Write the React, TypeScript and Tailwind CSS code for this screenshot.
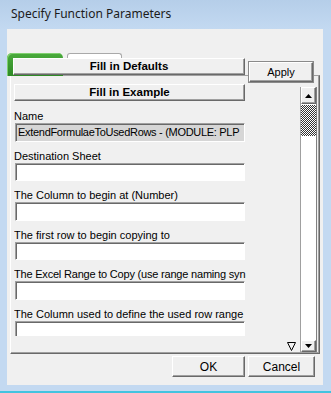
import React from "react";

const raised =
  "bg-[#f0f0f0] border border-t-white border-l-white border-r-[#696969] border-b-[#696969] shadow-[inset_-1px_-1px_0_#a0a0a0]";
const sunken =
  "border border-t-[#a0a0a0] border-l-[#a0a0a0] border-r-white border-b-white shadow-[inset_1px_1px_0_#696969]";

function Field({ label, tight }: { label: string; tight?: boolean }) {
  return (
    <div className="flex flex-col shrink-0">
      <div
        className={`h-[21px] pt-[8px] leading-[13px] whitespace-nowrap overflow-hidden ${
          tight ? "tracking-[-0.2px]" : ""
        }`}
      >
        {label}
      </div>
      <div className={`h-[18.5px] w-[230px] ml-[1px] bg-white ${sunken}`} />
    </div>
  );
}

function Tri({ up }: { up: boolean }) {
  return (
    <svg width="7" height="4" viewBox="0 0 7 4">
      {up ? <polygon points="0,4 7,4 3.5,0" fill="#000" /> : <polygon points="0,0 7,0 3.5,4" fill="#000" />}
    </svg>
  );
}

export default function App() {
  const labels: { t: string; tight?: boolean }[] = [
    { t: "Destination Sheet" },
    { t: "The Column to begin at (Number)" },
    { t: "The first row to begin copying to" },
    { t: "The Excel Range to Copy (use range naming syn", tight: true },
    { t: "The Column used to define the used row range" },
  ];
  return (
    <div className="w-[331px] h-[393px] flex flex-col bg-[#c1d8f0] overflow-hidden">
      <div className="h-[29px] shrink-0 flex items-center pl-[11px] pb-[2px] bg-gradient-to-b from-[#b5cee9] to-[#c3d9f1] text-[12px] text-[#1b1b1b] font-['Noto_Sans',sans-serif]">
        Specify Function Parameters
      </div>
      <div className="flex h-[356px] shrink-0">
        <div className="w-[7px] shrink-0 bg-[#c3d9f1]" />
        <div className="w-[316px] shrink-0 bg-[#f0f0f0] relative flex flex-col text-[11px] text-black font-['Liberation_Sans',Arial,sans-serif]">
          <div className="h-[24px] shrink-0" />
          <div className="h-[22px] shrink-0 flex items-start relative z-10">
            <div className="w-[56px] h-[23px] rounded-t-[5px] bg-gradient-to-b from-[#4aab3c] to-[#2f8a26] shadow-[inset_1px_1px_0_#7fcf6f]" />
            <div className="ml-[4px] w-[55px] h-[22px] rounded-t-[3px] bg-white border border-[#a9a9a9] border-b-0" />
          </div>
          <div className="ml-[3px] w-[310px] h-[279px] shrink-0 flex border-t border-t-[#a0a0a0] border-l border-l-white border-r border-r-[#696969] border-b border-b-[#696969] shadow-[inset_-1px_-1px_0_#a0a0a0]">
            <div className="w-[289px] shrink-0 flex flex-col pl-[3px] pt-[8px]">
              <div className="h-[252px] w-[232px] overflow-hidden flex flex-col">
                <div className={`h-[17px] w-[231px] shrink-0 mb-[1px] flex items-center justify-center font-bold text-[11.5px] ${raised}`}>
                  Fill in Example
                </div>
                <div className="flex flex-col shrink-0">
                  <div className="h-[21px] pt-[8px] leading-[13px] whitespace-nowrap">Name</div>
                  <div className={`h-[18.5px] w-[230px] ml-[1px] bg-[#d6d6d6] ${sunken} flex items-center pl-[2px] whitespace-nowrap overflow-hidden leading-[13px] tracking-[-0.3px]`}>
                    ExtendFormulaeToUsedRows - (MODULE: PLP
                  </div>
                </div>
                {labels.map((l) => (
                  <Field key={l.t} label={l.t} tight={l.tight} />
                ))}
              </div>
              <div className="flex justify-end pr-[4px] pt-[6px]">
                <svg width="9" height="9" viewBox="0 0 9 9">
                  <polygon points="0.5,0.5 8.5,0.5 4.5,8.5" fill="none" stroke="#000" strokeWidth="1" />
                </svg>
              </div>
            </div>
            <div className="w-[17px] shrink-0 mt-[11px] h-[265px] flex flex-col bg-white border-l border-l-[#a0a0a0] border-r border-r-[#808080]">
              <div className={`h-[17px] shrink-0 flex items-center justify-center ${raised}`}>
                <Tri up />
              </div>
              <div className="h-[31px] mt-[1px] shrink-0 bg-[repeating-conic-gradient(#333333_0_25%,#ffffff_0_50%)] bg-[length:2px_2px]" />
              <div className="flex-1" />
              <div className={`h-[12px] shrink-0 flex items-center justify-center ${raised}`}>
                <Tri up={false} />
              </div>
            </div>
          </div>
          <div className="mt-[2px] h-[21px] shrink-0 flex justify-end gap-[3px] pr-[8px] text-[12px]">
            <div className={`w-[73px] h-[21px] flex items-center justify-center ${raised}`}>OK</div>
            <div className={`w-[67px] h-[21px] flex items-center justify-center ${raised}`}>Cancel</div>
          </div>

          <div className={`absolute left-[6px] top-[29px] w-[232px] h-[17px] flex items-center justify-center font-bold text-[11.5px] z-20 ${raised}`}>
            Fill in Defaults
          </div>
          <div className={`absolute left-[242px] top-[33px] w-[64px] h-[20px] flex items-center justify-center z-20 outline outline-1 outline-[#8a8a8a] ${raised}`}>
            Apply
          </div>
        </div>
        <div className="flex-1 bg-[#c3d9f1]" />
      </div>
      <div className="flex-1 flex flex-col">
        <div className="flex-1 bg-[#c3d9f1]" />
        <div className="h-[2px] bg-[#43c3df]" />
      </div>
    </div>
  );
}
